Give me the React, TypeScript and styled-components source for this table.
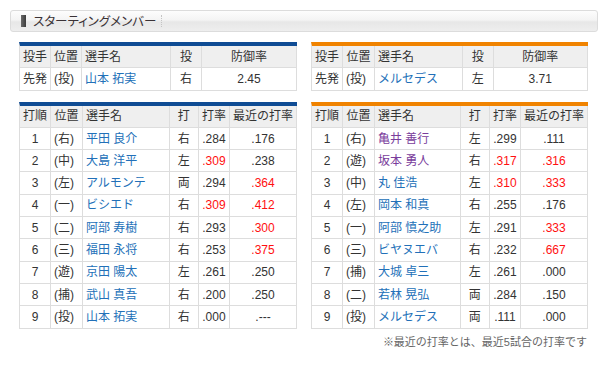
import styled, { createGlobalStyle } from "styled-components";

const GlobalStyle = createGlobalStyle`
  html, body {
    margin: 0;
    padding: 0;
    background: #fff;
  }
  body {
    font-family: "Liberation Sans", "Noto Sans CJK JP", sans-serif;
    font-size: 12px;
    color: #333;
  }
`;

const BLUE = "#0f4c94";
const ORANGE = "#f08300";

export const Page = styled.div`
  width: 600px;
  height: 366px;
  box-sizing: border-box;
  padding: 10px 2px 0 10px;
  overflow: hidden;
`;

export const TitleBar = styled.div`
  height: 22px;
  box-sizing: border-box;
  border: 1px solid #dcdcdc;
  border-radius: 3px;
  background: linear-gradient(
    to bottom,
    #fdfdfd 0%,
    #f4f4f4 45%,
    #e7e7e7 55%,
    #eeeeee 100%
  );
  display: flex;
  align-items: center;
  padding-left: 10px;
`;

export const TitleMark = styled.span`
  width: 5px;
  height: 12px;
  background: linear-gradient(to right, #6a6a6a, #3c3c3c);
  margin-right: 7px;
`;

export const TitleText = styled.span`
  font-family: "Noto Sans CJK JP", sans-serif;
  font-size: 12.5px;
  font-feature-settings: "palt";
  color: #3a3236;
  line-height: 16px;
`;

export const TitleDivider = styled.span`
  height: 12px;
  border-left: 1px dotted #c4c4c4;
  margin-left: 5px;
`;

export const Board = styled.div`
  display: grid;
  grid-template-columns: 278px 277px;
  column-gap: 14px;
  row-gap: 11px;
  padding: 10px 10px 0 9px;
`;

export const Table = styled.table<{ $accent: string }>`
  table-layout: fixed;
  border-collapse: separate;
  border-spacing: 0;
  border-top: 4px solid ${(p) => p.$accent};
  border-left: 1px solid #dddddd;
`;

export const Col = styled.col<{ $w: number }>`
  width: ${(p) => p.$w}px;
`;

export const Row = styled.tr`
  height: 22.3px;
`;

export const HeadCell = styled.th<{ $align?: string }>`
  background: #efefef;
  font-weight: normal;
  text-align: ${(p) => p.$align || "center"};
  padding: 0 3px;
  border-right: 1px solid #dddddd;
  border-bottom: 1px solid #dddddd;
  line-height: 16px;
  white-space: nowrap;
  overflow: hidden;
`;

export const Cell = styled.td<{ $align?: string; $hot?: boolean }>`
  background: #fff;
  text-align: ${(p) => p.$align || "center"};
  padding: 0 3px;
  border-right: 1px solid #dddddd;
  border-bottom: 1px solid #dddddd;
  line-height: 16px;
  white-space: nowrap;
  overflow: hidden;
  color: ${(p) => (p.$hot ? "#ff1010" : "#333")};
`;

export const PlayerLink = styled.a<{ $visited?: boolean }>`
  color: ${(p) => (p.$visited ? "#7a3d9c" : "#2270b8")};
  text-decoration: none;
`;

export const Note = styled.div`
  grid-column: 1 / span 2;
  margin-top: -6px;
  text-align: right;
  font-size: 11px;
  line-height: 16px;
  color: #666;
  padding-right: 1px;
`;

type Pitcher = { pos: string; name: string; hand: string; era: string };
type Batter = {
  no: number;
  pos: string;
  name: string;
  hand: string;
  avg: string;
  avgHot?: boolean;
  recent: string;
  recentHot?: boolean;
  visited?: boolean;
};

const dragonsPitcher: Pitcher = { pos: "(投)", name: "山本 拓実", hand: "右", era: "2.45" };
const giantsPitcher: Pitcher = { pos: "(投)", name: "メルセデス", hand: "左", era: "3.71" };

const dragons: Batter[] = [
  { no: 1, pos: "(右)", name: "平田 良介", hand: "右", avg: ".284", recent: ".176" },
  { no: 2, pos: "(中)", name: "大島 洋平", hand: "左", avg: ".309", avgHot: true, recent: ".238" },
  { no: 3, pos: "(左)", name: "アルモンテ", hand: "両", avg: ".294", recent: ".364", recentHot: true },
  { no: 4, pos: "(一)", name: "ビシエド", hand: "右", avg: ".309", avgHot: true, recent: ".412", recentHot: true },
  { no: 5, pos: "(二)", name: "阿部 寿樹", hand: "右", avg: ".293", recent: ".300", recentHot: true },
  { no: 6, pos: "(三)", name: "福田 永将", hand: "右", avg: ".253", recent: ".375", recentHot: true },
  { no: 7, pos: "(遊)", name: "京田 陽太", hand: "左", avg: ".261", recent: ".250" },
  { no: 8, pos: "(捕)", name: "武山 真吾", hand: "右", avg: ".200", recent: ".250" },
  { no: 9, pos: "(投)", name: "山本 拓実", hand: "右", avg: ".000", recent: ".---" },
];

const giants: Batter[] = [
  { no: 1, pos: "(右)", name: "亀井 善行", hand: "左", avg: ".299", recent: ".111", visited: true },
  { no: 2, pos: "(遊)", name: "坂本 勇人", hand: "右", avg: ".317", avgHot: true, recent: ".316", recentHot: true, visited: true },
  { no: 3, pos: "(中)", name: "丸 佳浩", hand: "左", avg: ".310", avgHot: true, recent: ".333", recentHot: true },
  { no: 4, pos: "(左)", name: "岡本 和真", hand: "右", avg: ".255", recent: ".176" },
  { no: 5, pos: "(一)", name: "阿部 慎之助", hand: "左", avg: ".291", recent: ".333", recentHot: true },
  { no: 6, pos: "(三)", name: "ビヤヌエバ", hand: "右", avg: ".232", recent: ".667", recentHot: true },
  { no: 7, pos: "(捕)", name: "大城 卓三", hand: "左", avg: ".261", recent: ".000" },
  { no: 8, pos: "(二)", name: "若林 晃弘", hand: "両", avg: ".284", recent: ".150" },
  { no: 9, pos: "(投)", name: "メルセデス", hand: "両", avg: ".111", recent: ".000" },
];

const PitcherTable = ({ accent, widths, p }: { accent: string; widths: number[]; p: Pitcher }) => (
  <Table $accent={accent}>
    <colgroup>
      {widths.map((w, i) => (
        <Col key={i} $w={w} />
      ))}
    </colgroup>
    <tbody>
      <Row>
        <HeadCell>投手</HeadCell>
        <HeadCell>位置</HeadCell>
        <HeadCell $align="left">選手名</HeadCell>
        <HeadCell>投</HeadCell>
        <HeadCell>防御率</HeadCell>
      </Row>
      <Row>
        <Cell>先発</Cell>
        <Cell $align="left">{p.pos}</Cell>
        <Cell $align="left">
          <PlayerLink href="#">{p.name}</PlayerLink>
        </Cell>
        <Cell>{p.hand}</Cell>
        <Cell>{p.era}</Cell>
      </Row>
    </tbody>
  </Table>
);

const LineupTable = ({ accent, widths, rows }: { accent: string; widths: number[]; rows: Batter[] }) => (
  <Table $accent={accent}>
    <colgroup>
      {widths.map((w, i) => (
        <Col key={i} $w={w} />
      ))}
    </colgroup>
    <tbody>
      <Row>
        <HeadCell>打順</HeadCell>
        <HeadCell>位置</HeadCell>
        <HeadCell $align="left">選手名</HeadCell>
        <HeadCell>打</HeadCell>
        <HeadCell>打率</HeadCell>
        <HeadCell>最近の打率</HeadCell>
      </Row>
      {rows.map((b) => (
        <Row key={b.no}>
          <Cell>{b.no}</Cell>
          <Cell $align="left">{b.pos}</Cell>
          <Cell $align="left">
            <PlayerLink href="#" $visited={b.visited}>
              {b.name}
            </PlayerLink>
          </Cell>
          <Cell>{b.hand}</Cell>
          <Cell $hot={b.avgHot}>{b.avg}</Cell>
          <Cell $hot={b.recentHot}>{b.recent}</Cell>
        </Row>
      ))}
    </tbody>
  </Table>
);

const App = () => {
  return (
    <Page>
      <GlobalStyle />
      <TitleBar>
        <TitleMark />
        <TitleText>スターティングメンバー</TitleText>
        <TitleDivider />
      </TitleBar>
      <Board>
        <PitcherTable accent={BLUE} widths={[31, 31, 89, 31, 95]} p={dragonsPitcher} />
        <PitcherTable accent={ORANGE} widths={[30, 32, 88, 31, 95]} p={giantsPitcher} />
        <LineupTable accent={BLUE} widths={[31, 32, 88, 30, 31, 65]} rows={dragons} />
        <LineupTable accent={ORANGE} widths={[30, 32, 88, 31, 30, 65]} rows={giants} />
        <Note>※最近の打率とは、最近5試合の打率です</Note>
      </Board>
    </Page>
  );
};

export default App;
